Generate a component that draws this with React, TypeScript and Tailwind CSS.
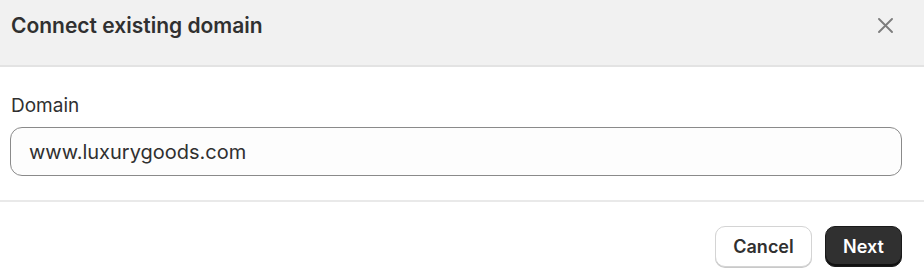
export default function App() {
  return (
    <div className="h-[280px] w-[924px] bg-white font-['Inter',sans-serif] text-[#303030] overflow-hidden">
      {/* Header */}
      <div className="flex h-[67px] items-start justify-between border-b-2 border-[#e3e3e3] bg-[#f1f1f1] pl-[11px] pr-[31px] pt-[11px]">
        <h1 className="text-[21px] font-semibold leading-[30px]">Connect existing domain</h1>
        <button className="mt-[7px] text-[#7d7d7d]" aria-label="Close">
          <svg width="15" height="15" viewBox="0 0 15 15" fill="none" stroke="currentColor" strokeWidth="1.9" strokeLinecap="round">
            <path d="M1 1L14 14M14 1L1 14" />
          </svg>
        </button>
      </div>

      {/* Body */}
      <div className="border-b-2 border-[#e9e9e9] pl-[10px] pr-[22px] pb-[24px] pt-[25px]">
        <label className="block pl-[1px] text-[19px] leading-[27px]">Domain</label>
        <div className="mt-[8px] flex h-[49px] items-center rounded-[12px] border border-[#8a8a8a] bg-[#fdfdfd] px-[18px]">
          <span className="text-[20px]">www.luxurygoods.com</span>
        </div>
      </div>

      {/* Footer */}
      <div className="flex justify-end gap-[13px] pr-[22px] pt-[24px]">
        <button className="h-[41px] w-[97px] rounded-[10px] border border-[#d4d4d4] bg-white text-[18px] font-semibold shadow-[0_1px_0_#c9c9c9]">
          Cancel
        </button>
        <button className="h-[41px] w-[77px] rounded-[10px] border border-[#1a1a1a] bg-[#303030] text-[18px] font-semibold text-white shadow-[inset_0_-2px_0_#111]">
          Next
        </button>
      </div>
    </div>
  );
}
